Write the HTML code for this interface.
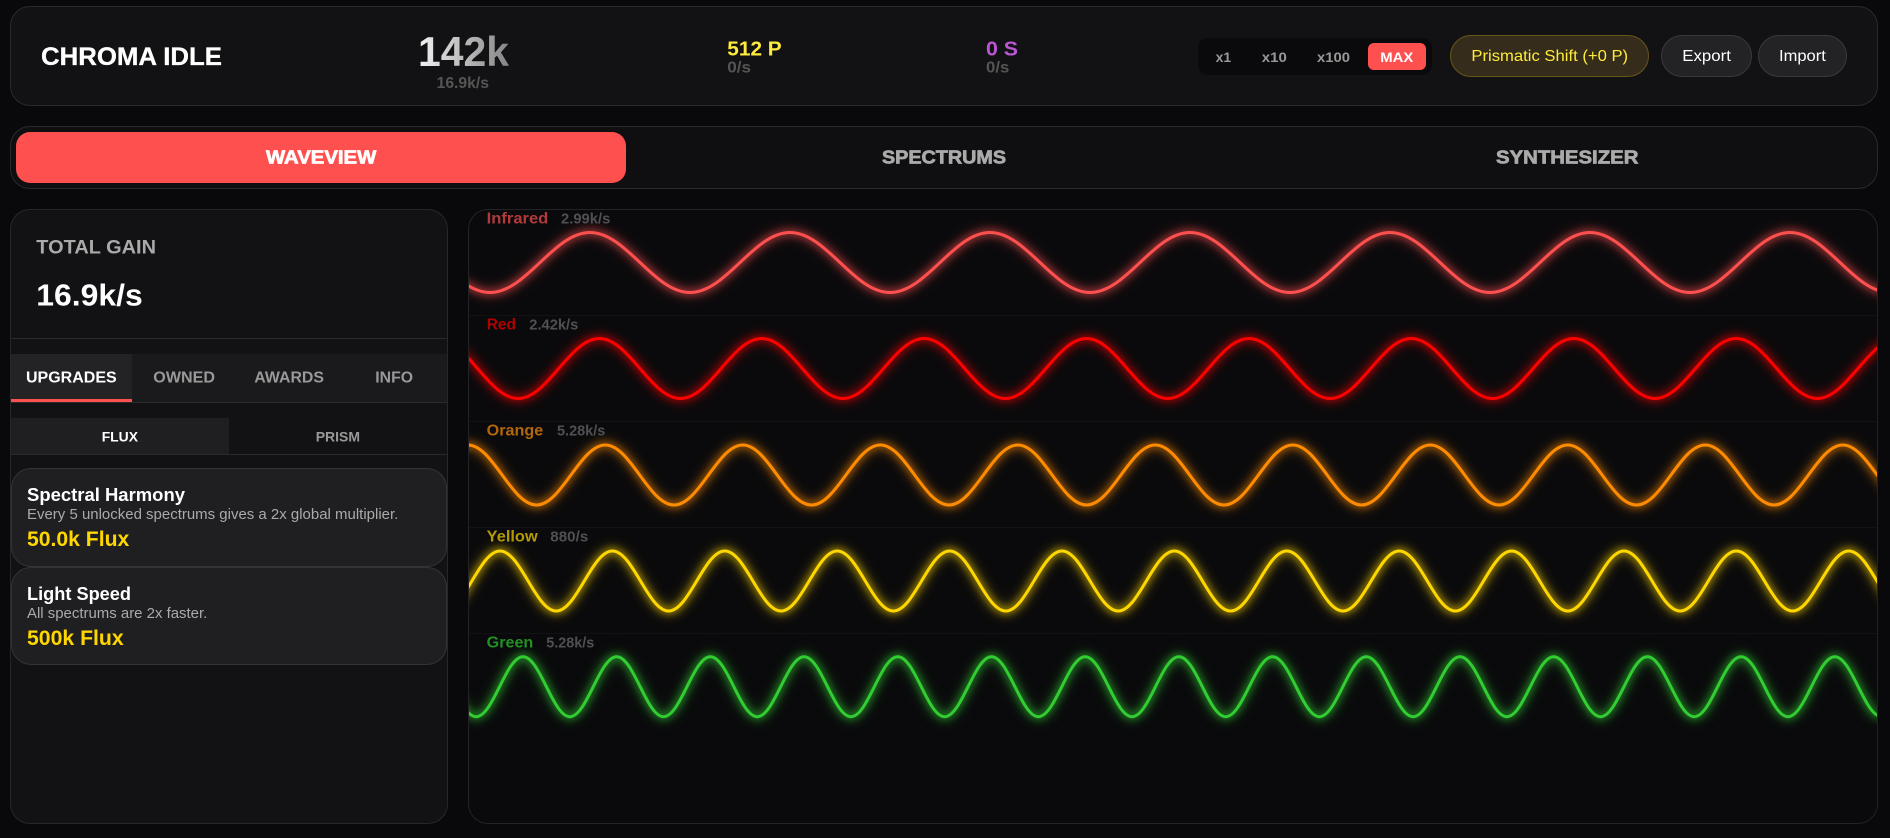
<!DOCTYPE html>
<html lang="en">
<head>
<meta charset="utf-8">
<title>Chroma Idle</title>
<style>
html,body{margin:0;padding:0;width:1890px;height:838px;overflow:hidden;background:#09090b;font-family:"Liberation Sans",sans-serif}
.b{position:absolute;box-sizing:border-box}
.line{position:absolute;height:1px}
svg{position:absolute;left:0;top:0}
text{font-family:"Liberation Sans",sans-serif;white-space:pre}
.w{fill:none;stroke-width:3;stroke-linejoin:round}
</style>
</head>
<body>
<!-- header -->
<div class="b" style="left:10px;top:6px;width:1868px;height:100px;background:#121214;border:1px solid #2a2a2e;border-radius:20px"></div>
<div class="b" style="left:1198px;top:38px;width:234px;height:37px;background:#0a0a0c;border-radius:10px"></div>
<div class="b" style="left:1368px;top:43px;width:58px;height:27px;background:#ff5050;border-radius:6px"></div>
<div class="b" style="left:1450px;top:35px;width:199px;height:42px;background:#352c1b;border:1px solid #67561b;border-radius:21px"></div>
<div class="b" style="left:1661px;top:35px;width:91px;height:42px;background:#232326;border:1px solid #3a3a3e;border-radius:21px"></div>
<div class="b" style="left:1758px;top:35px;width:89px;height:42px;background:#232326;border:1px solid #3a3a3e;border-radius:21px"></div>
<!-- main tabs -->
<div class="b" style="left:10px;top:126px;width:1868px;height:63px;background:#0f0f11;border:1px solid #2a2a2e;border-radius:20px"></div>
<div class="b" style="left:16px;top:132px;width:610px;height:51px;background:#ff5050;border-radius:14px"></div>
<!-- left panel -->
<div class="b" style="left:10px;top:209px;width:438px;height:615px;background:#121214;border:1px solid #27272a;border-radius:20px"></div>
<div class="line" style="left:11px;top:338px;width:436px;background:#2a2a2e"></div>
<div class="b" style="left:11px;top:354px;width:436px;height:48px;background:#1a1a1d"></div>
<div class="b" style="left:11px;top:354px;width:121px;height:48px;background:#232326"></div>
<div class="b" style="left:11px;top:399px;width:121px;height:3px;background:#ff5050"></div>
<div class="line" style="left:11px;top:402px;width:436px;background:#2a2a2e"></div>
<div class="b" style="left:11px;top:418px;width:218px;height:36px;background:#1f1f22"></div>
<div class="line" style="left:11px;top:454px;width:436px;background:#2a2a2e"></div>
<div class="b" style="left:11px;top:468px;width:436px;height:99px;background:#1f1f22;border:1px solid #333336;border-radius:20px"></div>
<div class="b" style="left:11px;top:567px;width:436px;height:98px;background:#1f1f22;border:1px solid #333336;border-radius:20px"></div>
<!-- wave panel -->
<div class="b" style="left:468px;top:209px;width:1410px;height:615px;background:#0a0a0c;border:1px solid #232326;border-radius:20px;overflow:hidden">
  <div class="line" style="left:0;top:105px;width:1408px;background:#121214"></div>
  <div class="line" style="left:0;top:211px;width:1408px;background:#121214"></div>
  <div class="line" style="left:0;top:317px;width:1408px;background:#121214"></div>
  <div class="line" style="left:0;top:423px;width:1408px;background:#121214"></div>
  <svg width="1890" height="838" viewBox="0 0 1890 838" style="left:-469px;top:-210px">
    <path class="w" stroke="#ff5050" style="filter:drop-shadow(0 0 4px #ff5050) drop-shadow(0 0 6px rgba(255,80,80,.5))" d="M390 232.5c36.42 0 63.58 60 100 60s63.58 -60 100 -60 63.58 60 100 60 63.58 -60 100 -60 63.58 60 100 60 63.58 -60 100 -60 63.58 60 100 60 63.58 -60 100 -60 63.58 60 100 60 63.58 -60 100 -60 63.58 60 100 60 63.58 -60 100 -60 63.58 60 100 60 63.58 -60 100 -60 63.58 60 100 60"/>
    <path class="w" stroke="#ff0000" style="filter:drop-shadow(0 0 4px #ff0000) drop-shadow(0 0 6px rgba(255,0,0,.5))" d="M436.9 338.5c29.57 0 51.63 60 81.2 60s51.63 -60 81.2 -60 51.63 60 81.2 60 51.63 -60 81.2 -60 51.63 60 81.2 60 51.63 -60 81.2 -60 51.63 60 81.2 60 51.63 -60 81.2 -60 51.63 60 81.2 60 51.63 -60 81.2 -60 51.63 60 81.2 60 51.63 -60 81.2 -60 51.63 60 81.2 60 51.63 -60 81.2 -60 51.63 60 81.2 60 51.63 -60 81.2 -60 51.63 60 81.2 60 51.63 -60 81.2 -60 51.63 60 81.2 60"/>
    <path class="w" stroke="#ff8c00" style="filter:drop-shadow(0 0 4px #ff8c00) drop-shadow(0 0 6px rgba(255,140,0,.5))" d="M330.3 445c25.04 0 43.71 60 68.75 60s43.71 -60 68.75 -60 43.71 60 68.75 60 43.71 -60 68.75 -60 43.71 60 68.75 60 43.71 -60 68.75 -60 43.71 60 68.75 60 43.71 -60 68.75 -60 43.71 60 68.75 60 43.71 -60 68.75 -60 43.71 60 68.75 60 43.71 -60 68.75 -60 43.71 60 68.75 60 43.71 -60 68.75 -60 43.71 60 68.75 60 43.71 -60 68.75 -60 43.71 60 68.75 60 43.71 -60 68.75 -60 43.71 60 68.75 60 43.71 -60 68.75 -60 43.71 60 68.75 60 43.71 -60 68.75 -60 43.71 60 68.75 60 43.71 -60 68.75 -60 43.71 60 68.75 60"/>
    <path class="w" stroke="#ffd700" style="filter:drop-shadow(0 0 4px #ffd700) drop-shadow(0 0 6px rgba(255,215,0,.5))" d="M387.6 551c20.47 0 35.73 60 56.2 60s35.73 -60 56.2 -60 35.73 60 56.2 60 35.73 -60 56.2 -60 35.73 60 56.2 60 35.73 -60 56.2 -60 35.73 60 56.2 60 35.73 -60 56.2 -60 35.73 60 56.2 60 35.73 -60 56.2 -60 35.73 60 56.2 60 35.73 -60 56.2 -60 35.73 60 56.2 60 35.73 -60 56.2 -60 35.73 60 56.2 60 35.73 -60 56.2 -60 35.73 60 56.2 60 35.73 -60 56.2 -60 35.73 60 56.2 60 35.73 -60 56.2 -60 35.73 60 56.2 60 35.73 -60 56.2 -60 35.73 60 56.2 60 35.73 -60 56.2 -60 35.73 60 56.2 60 35.73 -60 56.2 -60 35.73 60 56.2 60"/>
    <path class="w" stroke="#32cd32" style="filter:drop-shadow(0 0 4px #32cd32) drop-shadow(0 0 6px rgba(50,205,50,.5))" d="M429.3 656.7c17.06 0 29.79 60 46.85 60s29.79 -60 46.85 -60 29.79 60 46.85 60 29.79 -60 46.85 -60 29.79 60 46.85 60 29.79 -60 46.85 -60 29.79 60 46.85 60 29.79 -60 46.85 -60 29.79 60 46.85 60 29.79 -60 46.85 -60 29.79 60 46.85 60 29.79 -60 46.85 -60 29.79 60 46.85 60 29.79 -60 46.85 -60 29.79 60 46.85 60 29.79 -60 46.85 -60 29.79 60 46.85 60 29.79 -60 46.85 -60 29.79 60 46.85 60 29.79 -60 46.85 -60 29.79 60 46.85 60 29.79 -60 46.85 -60 29.79 60 46.85 60 29.79 -60 46.85 -60 29.79 60 46.85 60 29.79 -60 46.85 -60 29.79 60 46.85 60 29.79 -60 46.85 -60 29.79 60 46.85 60 29.79 -60 46.85 -60 29.79 60 46.85 60"/>
  </svg>
</div>
<!-- text layer -->
<svg width="1890" height="838" viewBox="0 0 1890 838" style="pointer-events:none">
  <defs>
    <linearGradient id="g" gradientUnits="userSpaceOnUse" x1="418" y1="0" x2="509" y2="0">
      <stop offset="0" stop-color="#f2f2f2"/><stop offset="1" stop-color="#858585"/>
    </linearGradient>
  </defs>
  <text x="41" y="65" font-size="25" font-weight="700" fill="#fff" stroke="#fff" stroke-width=".3" textLength="181" lengthAdjust="spacingAndGlyphs">CHROMA IDLE</text>
  <text x="418" y="66" font-size="42" font-weight="700" fill="url(#g)" textLength="91" lengthAdjust="spacingAndGlyphs">142k</text>
  <text x="436.6" y="88" font-size="15.5" font-weight="700" fill="#555" textLength="52.4" lengthAdjust="spacingAndGlyphs">16.9k/s</text>
  <text x="727.3" y="55.3" font-size="20.5" font-weight="700" fill="#ffeb3b" textLength="54.4" lengthAdjust="spacingAndGlyphs">512 P</text>
  <text x="727.3" y="72.7" font-size="15.5" font-weight="700" fill="#555" textLength="23.7" lengthAdjust="spacingAndGlyphs">0/s</text>
  <text x="986" y="55.3" font-size="20.5" font-weight="700" fill="#ba55d3" textLength="32" lengthAdjust="spacingAndGlyphs">0 S</text>
  <text x="986" y="72.7" font-size="15.5" font-weight="700" fill="#555" textLength="23.3" lengthAdjust="spacingAndGlyphs">0/s</text>
  <text x="1215.6" y="62" font-size="14" font-weight="700" fill="#999" textLength="15.6" lengthAdjust="spacingAndGlyphs">x1</text>
  <text x="1261.8" y="62" font-size="14" font-weight="700" fill="#999" textLength="25" lengthAdjust="spacingAndGlyphs">x10</text>
  <text x="1317" y="62" font-size="14" font-weight="700" fill="#999" textLength="33" lengthAdjust="spacingAndGlyphs">x100</text>
  <text x="1380.3" y="62" font-size="14" font-weight="700" fill="#fff" textLength="33" lengthAdjust="spacingAndGlyphs">MAX</text>
  <text x="1471.4" y="61" font-size="16" fill="#ffeb3b" textLength="156.7" lengthAdjust="spacingAndGlyphs">Prismatic Shift (+0 P)</text>
  <text x="1682.3" y="61" font-size="16" fill="#fff" textLength="48.6" lengthAdjust="spacingAndGlyphs">Export</text>
  <text x="1779" y="61" font-size="16" fill="#fff" textLength="46.8" lengthAdjust="spacingAndGlyphs">Import</text>

  <text x="266" y="163.5" font-size="18" font-weight="700" fill="#fff" stroke="#fff" stroke-width=".7" textLength="110.3" lengthAdjust="spacingAndGlyphs">WAVEVIEW</text>
  <text x="882" y="163.5" font-size="18" font-weight="700" fill="#aaa" stroke="#aaa" stroke-width=".7" textLength="124" lengthAdjust="spacingAndGlyphs">SPECTRUMS</text>
  <text x="1496" y="163.5" font-size="18" font-weight="700" fill="#aaa" stroke="#aaa" stroke-width=".7" textLength="142.4" lengthAdjust="spacingAndGlyphs">SYNTHESIZER</text>

  <text x="36.3" y="253.7" font-size="19" font-weight="700" fill="#aaa" textLength="119.7" lengthAdjust="spacingAndGlyphs">TOTAL GAIN</text>
  <text x="36.3" y="305.7" font-size="31" font-weight="700" fill="#fff" textLength="106.4" lengthAdjust="spacingAndGlyphs">16.9k/s</text>

  <text x="26" y="382.7" font-size="16" font-weight="700" fill="#fff" textLength="90.7" lengthAdjust="spacingAndGlyphs">UPGRADES</text>
  <text x="153.3" y="382.7" font-size="16" font-weight="700" fill="#999" textLength="61.7" lengthAdjust="spacingAndGlyphs">OWNED</text>
  <text x="254.3" y="382.7" font-size="16" font-weight="700" fill="#999" textLength="69.7" lengthAdjust="spacingAndGlyphs">AWARDS</text>
  <text x="375.3" y="382.7" font-size="16" font-weight="700" fill="#999" textLength="37.7" lengthAdjust="spacingAndGlyphs">INFO</text>
  <text x="101.7" y="441.3" font-size="14" font-weight="700" fill="#fff" textLength="36.3" lengthAdjust="spacingAndGlyphs">FLUX</text>
  <text x="315.7" y="441.3" font-size="14" font-weight="700" fill="#999" textLength="44.3" lengthAdjust="spacingAndGlyphs">PRISM</text>

  <text x="27" y="501" font-size="18" font-weight="700" fill="#fff" textLength="158" lengthAdjust="spacingAndGlyphs">Spectral Harmony</text>
  <text x="27" y="519" font-size="14.5" fill="#aaa" textLength="371.3" lengthAdjust="spacingAndGlyphs">Every 5 unlocked spectrums gives a 2x global multiplier.</text>
  <text x="27" y="546" font-size="21" font-weight="700" fill="#ffd700" textLength="102.3" lengthAdjust="spacingAndGlyphs">50.0k Flux</text>
  <text x="27" y="600" font-size="18" font-weight="700" fill="#fff" textLength="104" lengthAdjust="spacingAndGlyphs">Light Speed</text>
  <text x="27" y="618" font-size="14.5" fill="#aaa" textLength="180.3" lengthAdjust="spacingAndGlyphs">All spectrums are 2x faster.</text>
  <text x="27" y="645" font-size="21" font-weight="700" fill="#ffd700" textLength="96.7" lengthAdjust="spacingAndGlyphs">500k Flux</text>

  <text x="486.7" y="223.3" font-size="16" font-weight="700" fill="#b33a3c" textLength="61.6" lengthAdjust="spacingAndGlyphs">Infrared</text>
  <text x="561" y="223.5" font-size="14.5" font-weight="700" fill="#505053" textLength="49.3" lengthAdjust="spacingAndGlyphs">2.99k/s</text>
  <text x="486.7" y="329.3" font-size="16" font-weight="700" fill="#b00000" textLength="29.3" lengthAdjust="spacingAndGlyphs">Red</text>
  <text x="529.3" y="329.5" font-size="14.5" font-weight="700" fill="#505053" textLength="49" lengthAdjust="spacingAndGlyphs">2.42k/s</text>
  <text x="486.7" y="435.7" font-size="16" font-weight="700" fill="#b3660a" textLength="56.6" lengthAdjust="spacingAndGlyphs">Orange</text>
  <text x="557" y="435.7" font-size="14.5" font-weight="700" fill="#505053" textLength="48.3" lengthAdjust="spacingAndGlyphs">5.28k/s</text>
  <text x="486.7" y="541.7" font-size="16" font-weight="700" fill="#b39a05" textLength="51" lengthAdjust="spacingAndGlyphs">Yellow</text>
  <text x="550.3" y="541.7" font-size="14.5" font-weight="700" fill="#505053" textLength="38" lengthAdjust="spacingAndGlyphs">880/s</text>
  <text x="486.7" y="647.7" font-size="16" font-weight="700" fill="#249024" textLength="46.6" lengthAdjust="spacingAndGlyphs">Green</text>
  <text x="546.3" y="647.7" font-size="14.5" font-weight="700" fill="#505053" textLength="48" lengthAdjust="spacingAndGlyphs">5.28k/s</text>
</svg>
</body>
</html>
